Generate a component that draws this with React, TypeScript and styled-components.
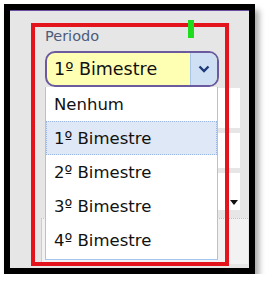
import React from "react";
import styled, { createGlobalStyle } from "styled-components";

const Global = createGlobalStyle`
  html, body { margin: 0; padding: 0; background: #ffffff; }
  body { font-family: "DejaVu Sans", Verdana, sans-serif; }
`;

const Frame = styled.div`
  margin: 4px 0 0 4px;
  width: 251px;
  height: 270px;
  box-sizing: border-box;
  border: 6px solid #000;
  box-shadow: 4px 6px 6px rgba(0, 0, 0, 0.35);
`;

const Screen = styled.div`
  position: relative;
  height: 100%;
  box-sizing: border-box;
  background: #e6e6e6;
  border-top: 1px solid #6a4ca0;
  padding: 17px 0 0 35px;
  overflow: hidden;
`;

const Label = styled.div`
  font-size: 14.5px;
  line-height: 17px;
  color: #4d5c7a;
  margin-bottom: 6px;
`;

const SelectWrap = styled.div`
  position: relative;
  width: 174px;
  z-index: 2;
`;

const Select = styled.div`
  display: flex;
  height: 36px;
  box-sizing: border-box;
  border: 2px solid #6b5a9e;
  border-radius: 10px;
  background: #ffffb4;
  overflow: hidden;
`;

const SelectValue = styled.div`
  flex: 1;
  display: flex;
  align-items: center;
  padding-left: 7px;
  font-size: 17.5px;
  color: #111;
`;

const SelectButton = styled.div`
  width: 26px;
  display: flex;
  align-items: center;
  justify-content: center;
  background: #cfe0f4;
  border-left: 1px solid #a9c6ea;
`;

const List = styled.ul`
  position: absolute;
  left: 0;
  top: 100%;
  width: 173px;
  margin: 0;
  padding: 0 0 2px;
  list-style: none;
  box-sizing: border-box;
  background: #fff;
  border: 1px solid #a6c5ee;
  border-top: none;
`;

const Item = styled.li<{ $active?: boolean }>`
  height: 34px;
  display: flex;
  align-items: center;
  box-sizing: border-box;
  padding-left: 7px;
  font-size: 16.5px;
  color: #111;
  background: ${(p) => (p.$active ? "#dfe8f6" : "transparent")};
  border: 1px ${(p) => (p.$active ? "dotted #9ab8e6" : "solid transparent")};
`;

const FieldStack = styled.div`
  display: flex;
  flex-direction: column;
  margin-top: 1px;
`;

const Field = styled.div<{ $h: number; $gap: number }>`
  position: relative;
  width: 195px;
  height: ${(p) => p.$h}px;
  margin-bottom: ${(p) => p.$gap}px;
  background: #fff;
`;

const Caret = styled.div`
  position: absolute;
  right: 2px;
  top: 27px;
  width: 0;
  height: 0;
  border-left: 4px solid transparent;
  border-right: 4px solid transparent;
  border-top: 5px solid #111;
`;

const Panel = styled.div`
  margin-left: -4px;
  width: 207px;
  height: 46px;
  box-sizing: border-box;
  background: #f2f2f2;
  border-top: 1px dotted #a6c5ee;
  border-left: 1px solid #b8d0ee;
`;

const Annotation = styled.div`
  position: absolute;
  left: 21px;
  top: 12px;
  width: 198px;
  height: 243px;
  box-sizing: border-box;
  border: 4px solid #e3141b;
  z-index: 3;
  pointer-events: none;
`;

const Marker = styled.div`
  position: absolute;
  left: 178px;
  top: 9px;
  width: 6px;
  height: 18px;
  background: #1fdc1f;
  z-index: 4;
`;

const options = ["Nenhum", "1º Bimestre", "2º Bimestre", "3º Bimestre", "4º Bimestre"];

export default function App() {
  return (
    <>
      <Global />
      <Frame>
        <Screen>
          <Label>Periodo</Label>
          <SelectWrap>
            <Select>
              <SelectValue>1º Bimestre</SelectValue>
              <SelectButton>
                <svg width="12" height="8" viewBox="0 0 12 8">
                  <path d="M1.5 1.5 L6 6 L10.5 1.5" fill="none" stroke="#1d3a78" strokeWidth="2.4" />
                </svg>
              </SelectButton>
            </Select>
            <List>
              {options.map((o) => (
                <Item key={o} $active={o === "1º Bimestre"}>
                  {o}
                </Item>
              ))}
            </List>
          </SelectWrap>
          <FieldStack>
            <Field $h={40} $gap={5} />
            <Field $h={35} $gap={5} />
            <Field $h={37} $gap={8}>
              <Caret />
            </Field>
            <Panel />
          </FieldStack>
          <Annotation />
          <Marker />
        </Screen>
      </Frame>
    </>
  );
}
